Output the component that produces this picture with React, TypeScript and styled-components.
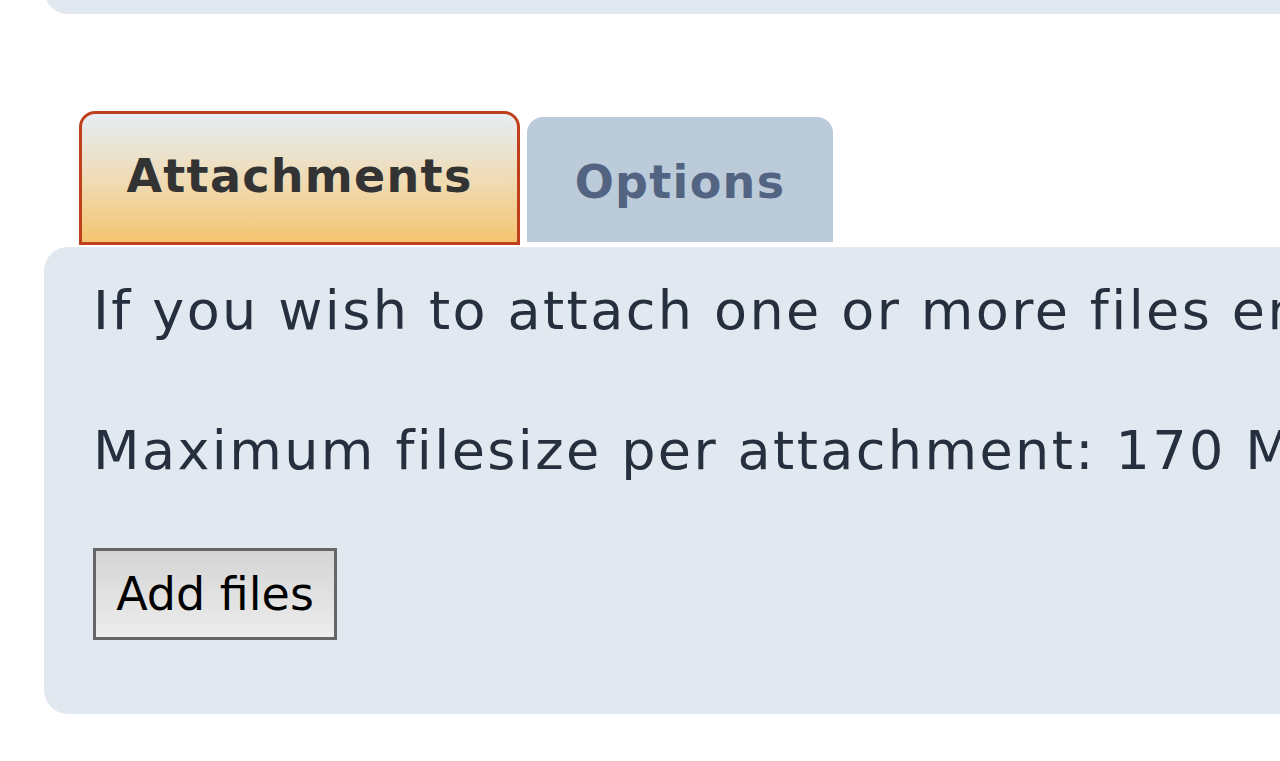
import React from "react"
import styled, { createGlobalStyle } from "styled-components"

const Global = createGlobalStyle`
html, body {
  margin: 0;
  padding: 0;
  background: #ffffff;
  overflow: hidden;
}
body {
  font-family: 'DejaVu Sans', Verdana, sans-serif;
}
`;

const Page = styled.div`
width: 1280px;
height: 761px;
overflow: hidden;
display: flex;
flex-direction: column;
`;

const TopPanel = styled.div`
margin-left: 45px;
margin-top: -30px;
height: 44px;
width: 1300px;
background: #e1e8ef;
border-radius: 0 0 0 22px;
flex: none;
`;

const TabBar = styled.ul`
list-style: none;
margin: 96px 0 0 79px;
padding: 0;
display: flex;
align-items: flex-end;
gap: 7px;
height: 135px;
flex: none;
`;

const Tab = styled.li<{ $active?: boolean }>`
box-sizing: border-box;
display: flex;
align-items: center;
justify-content: center;
font-weight: bold;
font-size: 46px;
letter-spacing: 1.3px;
border-radius: 16px 16px 0 0;
${p => p.$active ? `
  width: 441px;
  height: 134px;
  color: #333333;
  border: 3px solid #c0401c;
  background: linear-gradient(to bottom, #e6edf4 0%, #f0dab0 55%, #f4c46f 100%);
  padding-bottom: 4px;
` : `
  width: 306px;
  height: 125px;
  margin-bottom: 3px;
  color: #536482;
  background: #bccbd9;
  padding-top: 4px;
`}
`;

const Panel = styled.div`
box-sizing: border-box;
margin: 2px 0 0 44px;
width: 1300px;
height: 467px;
background: #e1e8ef;
border-radius: 24px 0 0 24px;
padding: 27px 0 0 49px;
color: #262f3d;
font-size: 54px;
letter-spacing: 2.4px;
white-space: nowrap;
flex: none;
display: flex;
flex-direction: column;
align-items: flex-start;
`;

const Para = styled.p<{ $space: number }>`
margin: 0 0 ${p => p.$space}px 0;
line-height: 74px;
`;

const Button = styled.button`
box-sizing: border-box;
width: 244px;
height: 92px;
border: 3px solid #666666;
background: linear-gradient(to bottom, #d4d4d4, #ededed);
color: #000000;
font-family: 'DejaVu Sans', sans-serif;
font-size: 46px;
letter-spacing: 0;
padding: 0;
border-radius: 0;
`;

export default function App() {
  return (
    <Page>
      <Global />
      <TopPanel />
      <TabBar>
        <Tab $active>Attachments</Tab>
        <Tab>Options</Tab>
      </TabBar>
      <Panel>
        <Para $space={66}>If you wish to attach one or more files enter the details below.</Para>
        <Para $space={60}>Maximum filesize per attachment: 170 MiB.</Para>
        <Button type="button">Add files</Button>
      </Panel>
    </Page>
  )
}
